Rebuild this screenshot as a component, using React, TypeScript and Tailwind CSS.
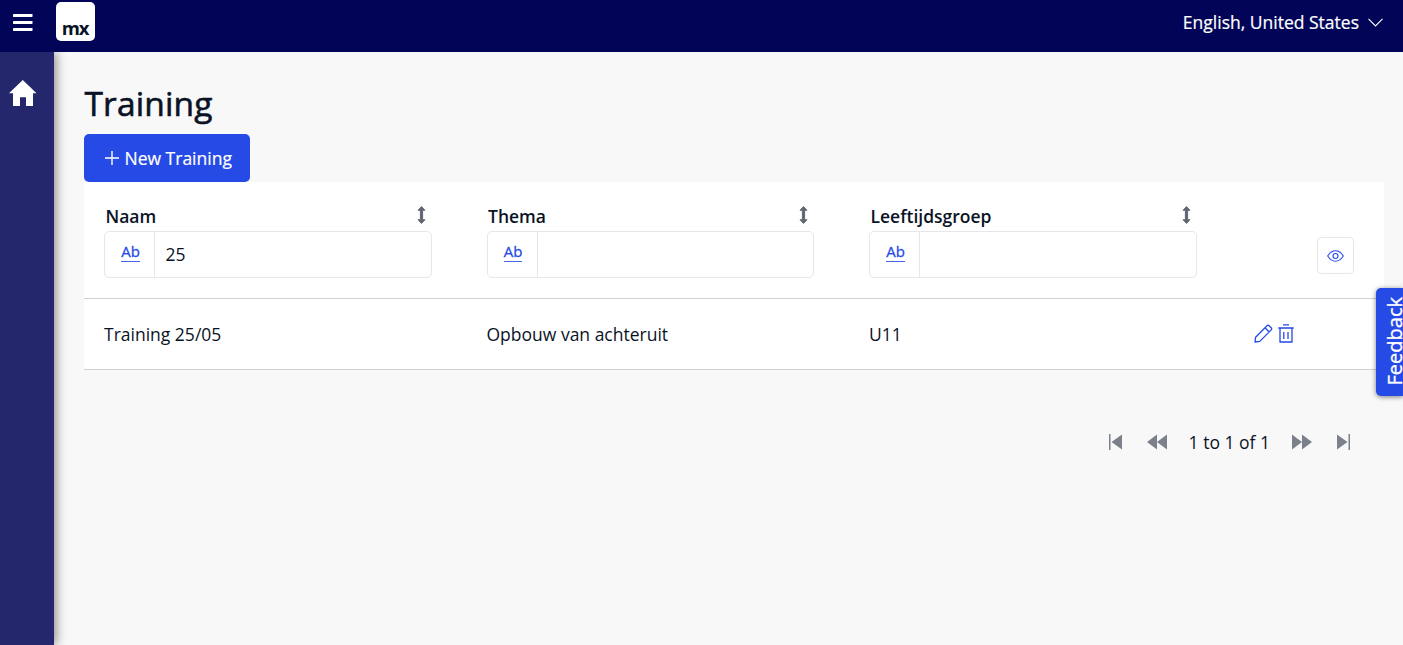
import type { ReactNode } from 'react';

const columns = [
  { name: 'Naam', filter: '25', value: 'Training 25/05' },
  { name: 'Thema', filter: '', value: 'Opbouw van achteruit' },
  { name: 'Leeftijdsgroep', filter: '', value: 'U11' },
];

function SortIcon() {
  return (
    <svg width="9" height="18" viewBox="0 0 9 18" fill="#606671">
      <path d="M4.5 0.6 7.9 4.3H5.6V13.7H7.9L4.5 17.4 1.1 13.7H3.4V4.3H1.1Z" stroke="#606671" strokeWidth="1" strokeLinejoin="round" />
    </svg>
  );
}

function PagingIcon({ children, width }: { children: ReactNode; width: number }) {
  return (
    <svg width={width} height="16" viewBox={`0 0 ${width} 16`} fill="#7b808a">
      {children}
    </svg>
  );
}

function TopBar() {
  return (
    <header className="relative z-10 flex h-[52px] shrink-0 items-start justify-between bg-[#020557] pr-5 pl-[13px]">
      <div className="flex">
        <svg className="mt-[14px]" width="20" height="18" viewBox="0 0 20 18" fill="#fff">
          <rect width="19.5" height="3" y="0" rx="0.4" />
          <rect width="19.5" height="3" y="7" rx="0.4" />
          <rect width="19.5" height="3" y="14" rx="0.4" />
        </svg>
        <div className="mt-[2px] ml-[23px] flex h-[39px] w-[39px] justify-center rounded-[5px] bg-white pt-[14px] pr-[1px] text-[18.5px] leading-[23px] font-bold tracking-[-1.2px] text-[#0a1325]">
          mx
        </div>
      </div>
      <div className="flex items-center pt-[10px] text-[17.5px] leading-[25px] text-white [-webkit-text-stroke:0.2px]">
        English, United States
        <svg className="ml-[9px]" width="15" height="9" viewBox="0 0 15 9" fill="none" stroke="#fff" strokeWidth="1.1">
          <path d="m.5.9 7 7 7-7" />
        </svg>
      </div>
    </header>
  );
}

function Filter({ value }: { value: string }) {
  return (
    <div className="flex h-[47px] w-[327.5px] rounded-[5px] border border-[#e7e7e9]">
      <div className="flex w-[50px] justify-center border-r border-[#e7e7e9] pt-[9px] pl-[2px]">
        <span className="h-[20.5px] border-b-[1.5px] border-[#4664e9] text-[15px] leading-[20px] text-[#264ae5] [-webkit-text-stroke:0.3px]">Ab</span>
      </div>
      <div className="pt-[10px] pl-[10.5px] text-[17.5px] leading-[25px]">{value}</div>
    </div>
  );
}

export default function App() {
  return (
    <div className="relative flex h-[645px] w-[1403px] flex-col overflow-hidden bg-[#f8f8f8] font-['Open_Sans',sans-serif] text-[17.5px] leading-[25px] text-[#0a1325]">
      <TopBar />
      <div className="flex flex-1">
        <nav className="w-[54px] shrink-0 bg-[#24276c] pt-[28px] pl-[9px] shadow-[2px_0_10px_rgba(0,0,0,0.45)]">
          <svg width="28" height="27" viewBox="0 0 28 27" fill="#fff">
            <path d="M13.8 0 27.5 13.3H24V26H17V17.3H11V26H4V13.3H0Z" />
          </svg>
        </nav>
        <main className="ml-[30px] w-[1300px]">
          <h1 className="mt-[28px] h-[54px] pl-[0.5px] text-[33.5px] leading-[46px] font-normal tracking-[0.15px] [-webkit-text-stroke:0.6px]">
            Training
          </h1>
          <button className="flex h-[48px] w-[166px] items-center rounded-[5px] bg-[#264ae5] pl-[20.5px] text-white [-webkit-text-stroke:0.2px]">
            <svg className="mr-[6px]" width="14" height="14" viewBox="0 0 14 14" stroke="#fff" strokeWidth="1.4">
              <path d="M7 0v14M0 7h14" />
            </svg>
            New Training
          </button>
          <div className="bg-white">
            <div className="flex h-[117px] border-b border-[#ced0d3]">
              {columns.map((c) => (
                <div key={c.name} className="w-[382.5px] pt-[22px] pl-5">
                  <div className="flex h-[27px] w-[327.5px] justify-between pr-[6px] pl-[1.5px] font-semibold">
                    <span>{c.name}</span>
                    <span className="pt-[2px]">
                      <SortIcon />
                    </span>
                  </div>
                  <Filter value={c.filter} />
                </div>
              ))}
              <div className="flex flex-1 justify-end pt-[55px] pr-[30px]">
                <button className="flex h-[37px] w-[37px] items-center justify-center rounded-[4px] border border-[#e7e7e9] pr-px">
                  <svg width="17" height="12" viewBox="0 0 17 12" fill="none" stroke="#264ae5" strokeWidth="1.1">
                    <path d="M.7 6Q4 .8 8.5.8T16.3 6Q13 11.2 8.5 11.2T.7 6Z" />
                    <circle cx="8.5" cy="6" r="2.5" />
                  </svg>
                </button>
              </div>
            </div>
            <div className="flex h-[71px] items-center border-b border-[#ced0d3]">
              {columns.map((c) => (
                <div key={c.name} className="w-[382.5px] pl-5">
                  {c.value}
                </div>
              ))}
              <div className="flex gap-[5px] pb-[2px] pl-[22px]">
                <svg width="19" height="19" viewBox="0 0 19 19" fill="none" stroke="#264ae5" strokeWidth="1.3" strokeLinejoin="round">
                  <path d="m1 18 .6-4.8L13 1.7q1.1-1.1 2.2 0l2 2q1.1 1.1 0 2.2L5.8 17.4ZM11 3.8l4.2 4.2" />
                </svg>
                <svg width="16" height="19" viewBox="0 0 16 19" fill="none" stroke="#264ae5" strokeWidth="1.3">
                  <path d="M5 .8h6M.3 4h15.4M2 4v14h12V4M5.8 8v7M10 8v7" />
                </svg>
              </div>
            </div>
          </div>
          <div className="mt-[58px] flex items-center justify-end pr-[33px]">
            <PagingIcon width={15}>
              <path d="M1 0h1.5v16H1ZM14 .5v15L3.5 8Z" />
            </PagingIcon>
            <span className="ml-[24px] flex">
              <PagingIcon width={20}>
                <path d="M10 .5v15L0 8ZM20 .5v15L10 8Z" />
              </PagingIcon>
            </span>
            <span className="mr-[22px] ml-[22px] pt-[2px]">1 to 1 of 1</span>
            <PagingIcon width={20}>
              <path d="M0 .5v15L10 8ZM10 .5v15L20 8Z" />
            </PagingIcon>
            <span className="ml-[25px] flex">
              <PagingIcon width={14}>
                <path d="M0 .5v15L10.5 8ZM11.5 0H13v16h-1.5Z" />
              </PagingIcon>
            </span>
          </div>
        </main>
      </div>
      <button className="absolute top-[287.5px] right-0 flex h-[108px] w-[27px] items-center justify-end rounded-l-[5px] bg-[#264ae5] text-white shadow-[0_1px_5px_rgba(0,0,0,0.5)]">
        <span className="mb-[1px] rotate-180 text-[20px] leading-[16px] whitespace-nowrap [-webkit-text-stroke:0.3px] [writing-mode:vertical-rl]">Feedback</span>
      </button>
    </div>
  );
}
